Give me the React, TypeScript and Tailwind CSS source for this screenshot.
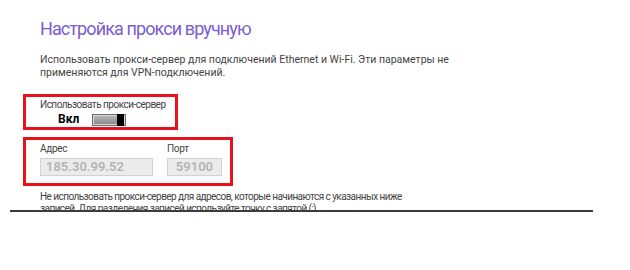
export default function App() {
  return (
    <div className="w-[630px] h-[270px] bg-white overflow-hidden font-['Roboto',sans-serif] text-[#444]">
      <div className="pl-[23px] pt-[17px]">
        <h1 className="pl-[17px] text-[18px] leading-[24px] font-normal text-[#7a5cd4] tracking-[-0.9px] whitespace-nowrap">
          Настройка прокси вручную
        </h1>
        <p className="pl-[17px] mt-[12px] text-[10.5px] leading-[13px] tracking-[0px] whitespace-nowrap">
          Использовать прокси-сервер для подключений Ethernet и Wi-Fi. Эти параметры не
          <br />
          применяются для VPN-подключений.
        </p>

        <div className="mt-[15px] w-[155px] h-[36px] border-[3px] border-[#e8121c] pl-[14px] pt-[1px]">
          <div className="whitespace-nowrap text-[10px] leading-[13px] tracking-[-0.5px]">Использовать прокси-сервер</div>
          <div className="flex items-center mt-[1px] pl-[18px]">
            <span className="w-[34px] text-[12px] leading-[15px] font-bold text-black">Вкл</span>
            <div className="w-[34px] h-[12px] border border-[#6d6d6d] bg-[#d6d6d6] p-[1px] flex">
              <div className="flex-1 bg-gradient-to-b from-[#b5b5b5] to-[#8c8c8c]" />
              <div className="w-[7px] -my-[2px] bg-black" />
            </div>
          </div>
        </div>

        <div className="mt-[7px] w-[210px] h-[49px] border-[3px] border-[#e8121c] pl-[14px] pt-[2px] flex gap-[14px]">
          <div className="flex flex-col">
            <span className="text-[10px] leading-[13px] tracking-[-0.3px]">Адрес</span>
            <div className="mt-[3px] w-[113px] h-[18px] border border-[#d2d2d2] bg-[#ebebeb] pl-[5px] text-[13px] leading-[16px] font-semibold text-[#b4b4b4]">
              185.30.99.52
            </div>
          </div>
          <div className="flex flex-col">
            <span className="text-[10px] leading-[13px] tracking-[-0.3px]">Порт</span>
            <div className="mt-[3px] w-[55px] h-[18px] border border-[#d2d2d2] bg-[#ebebeb] text-right pr-[8px] text-[13px] leading-[16px] font-semibold text-[#b4b4b4]">
              59100
            </div>
          </div>
        </div>
      </div>

      <div className="ml-[10px] w-[583px] h-[26px] overflow-hidden border-b-2 border-[#3c3c3c]">
        <p className="pl-[30px] pt-[5px] text-[10px] leading-[12px] tracking-[-0.55px] whitespace-nowrap">
          Не использовать прокси-сервер для адресов, которые начинаются с указанных ниже
          <br />
          записей. Для разделения записей используйте точку с запятой (;).
        </p>
      </div>
    </div>
  );
}
